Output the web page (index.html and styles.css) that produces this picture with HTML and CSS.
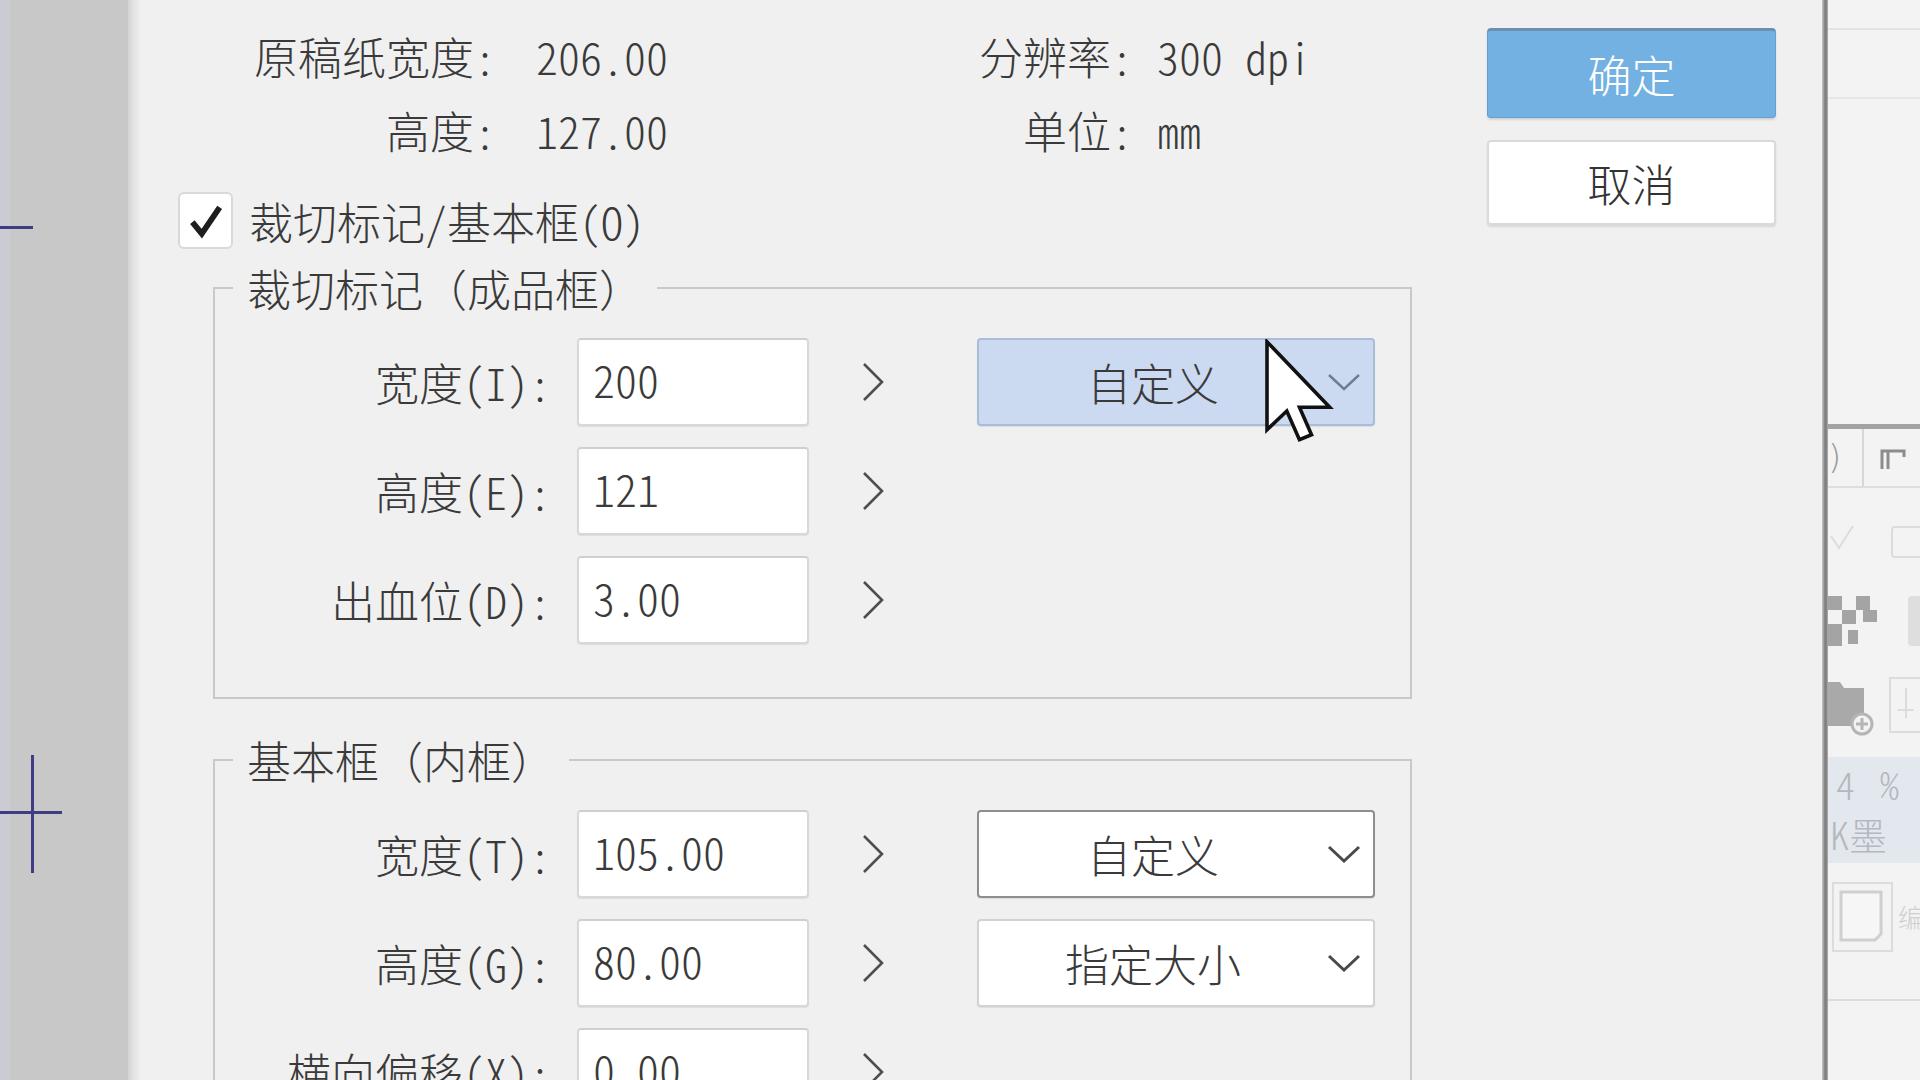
FILE: index.html
```html
<!DOCTYPE html>
<html lang="zh-CN">
<head>
    <meta charset="UTF-8">
    <title>裁切标记/基本框</title>
    <link rel="stylesheet" href="styles.css">
</head>
<body>
    <!-- canvas strip with the trim marks -->
    <div class="canvas">
        <span class="trim trim-top"></span>
        <span class="trim trim-cross-v"></span>
        <span class="trim trim-cross-h"></span>
    </div>
    <div class="canvas-edge"></div>

    <!-- settings dialog -->
    <div class="dialog">
        <div class="form">
            <div class="info">
                <div class="key">原稿纸宽度:</div><div class="val">206.00</div>
                <div class="key">分辨率:</div><div class="val val-b">300 dpi</div>
                <div class="key">高度:</div><div class="val">127.00</div>
                <div class="key">单位:</div><div class="val val-b">mm</div>
            </div>

            <label class="check-row">
                <span class="checkbox">
                    <svg viewBox="0 0 40 40"><path d="M7 21 L16 32 L33 7"/></svg>
                </span>
                裁切标记/基本框(O)
            </label>

            <fieldset class="group">
                <legend>裁切标记（成品框）</legend>
                <div class="row">
                    <span class="lbl">宽度(I):</span>
                    <div class="field">200</div>
                    <svg class="step" viewBox="0 0 40 40"><polyline points="11,2 29,20 11,38"/></svg>
                    <div class="select is-hot">
                        <span class="select-text">自定义</span>
                        <svg class="caret" viewBox="0 0 34 18"><polyline points="2,2 17,16 32,2"/></svg>
                    </div>
                </div>
                <div class="row">
                    <span class="lbl">高度(E):</span>
                    <div class="field">121</div>
                    <svg class="step" viewBox="0 0 40 40"><polyline points="11,2 29,20 11,38"/></svg>
                </div>
                <div class="row">
                    <span class="lbl">出血位(D):</span>
                    <div class="field">3.00</div>
                    <svg class="step" viewBox="0 0 40 40"><polyline points="11,2 29,20 11,38"/></svg>
                </div>
            </fieldset>

            <fieldset class="group group-inner">
                <legend>基本框（内框）</legend>
                <div class="row">
                    <span class="lbl">宽度(T):</span>
                    <div class="field">105.00</div>
                    <svg class="step" viewBox="0 0 40 40"><polyline points="11,2 29,20 11,38"/></svg>
                    <div class="select is-focus">
                        <span class="select-text">自定义</span>
                        <svg class="caret" viewBox="0 0 34 18"><polyline points="2,2 17,16 32,2"/></svg>
                    </div>
                </div>
                <div class="row">
                    <span class="lbl">高度(G):</span>
                    <div class="field">80.00</div>
                    <svg class="step" viewBox="0 0 40 40"><polyline points="11,2 29,20 11,38"/></svg>
                    <div class="select">
                        <span class="select-text">指定大小</span>
                        <svg class="caret" viewBox="0 0 34 18"><polyline points="2,2 17,16 32,2"/></svg>
                    </div>
                </div>
                <div class="row">
                    <span class="lbl">横向偏移(X):</span>
                    <div class="field">0.00</div>
                    <svg class="step" viewBox="0 0 40 40"><polyline points="11,2 29,20 11,38"/></svg>
                </div>
            </fieldset>
        </div>

        <div class="actions">
            <button class="btn btn-ok">确定</button>
            <button class="btn btn-cancel">取消</button>
        </div>

        <!-- mouse pointer over the first dropdown -->
        <svg class="cursor" viewBox="-0.5 -0.5 13 20">
            <path d="M0 0 L0 16 L3.6 12.6 L5.9 17.8 L8.1 16.9 L5.9 11.9 L11.4 11.9 Z"/>
        </svg>
    </div>

    <div class="frame-line"></div>

    <!-- docked panel, mostly hidden behind the dialog -->
    <div class="side">
        <div class="side-head"></div>
        <div class="side-bar"></div>
        <div class="side-space"></div>
        <div class="side-rule"></div>
        <div class="side-tabs">
            <div class="side-tab">)</div>
            <div class="side-tab side-tab-icon">
                <svg viewBox="0 0 30 30"><path d="M4 26 V8 H26 V14 M10 8 V26"/></svg>
            </div>
        </div>
        <svg class="side-tools" viewBox="0 0 92 536">
            <polyline class="faint" points="3,48 11,60 25,38"/>
            <rect class="faint" x="64" y="39" width="30" height="30" rx="3"/>
            <g class="checker">
                <rect x="0" y="108" width="14" height="14"/>
                <rect x="28" y="108" width="14" height="14"/>
                <rect x="14" y="122" width="14" height="14"/>
                <rect x="35" y="122" width="14" height="12"/>
                <rect x="0" y="136" width="14" height="22"/>
                <rect x="20" y="142" width="10" height="14"/>
            </g>
            <rect class="soft" x="80" y="108" width="14" height="50" rx="4"/>
            <path class="folder" d="M0 194 H12 L16 200 H36 V238 H0 Z"/>
            <circle class="plus" cx="34" cy="236" r="10"/>
            <path class="plus-mark" d="M28 236 H40 M34 230 V242"/>
            <rect class="faint" x="62" y="190" width="32" height="54"/>
            <path class="faint" d="M78 200 V230 M70 222 H86"/>
            <rect class="band" x="0" y="269" width="92" height="106"/>
            <text class="band-text" x="8" y="312">4</text>
            <text class="band-text" x="52" y="312">%</text>
            <text class="band-text" x="2" y="362">K墨</text>
            <rect class="faint" x="5" y="395" width="59" height="68"/>
            <path class="doc" d="M13 404 H53 V446 L47 452 H13 Z"/>
            <text class="band-text small" x="70" y="440">编</text>
            <line class="faint" x1="0" y1="512" x2="92" y2="512"/>
        </svg>
    </div>
</body>
</html>
```
FILE: styles.css
```css
/* page: canvas strip, dialog, docked panel side by side */
body {
    margin: 0;
    display: flex;
    height: 1080px;
    overflow: hidden;
    background: #f0f0f0;
    font-family: "Noto Sans CJK SC", sans-serif;
    font-size: 44px;
    font-weight: 300;
    color: #3a3a3a;
    font-feature-settings: "hwid" 1;
}

/* gray canvas with trim marks */
.canvas {
    position: relative;
    width: 128px;
    flex: none;
    background: linear-gradient(to right, #cbcbd3 0, #cbcbd3 10px, #c8c8c8 10px);
}
.trim {
    position: absolute;
    background: #3f3c86;
}
.trim-top { left: 0; top: 226px; width: 33px; height: 3px; }
.trim-cross-v { left: 31px; top: 755px; width: 3px; height: 118px; }
.trim-cross-h { left: 0; top: 811px; width: 62px; height: 3px; }

.canvas-edge {
    width: 12px;
    flex: none;
    background: linear-gradient(to right, #d4d4d4, #e4e4e4 50%, #eeeeee);
}

/* dialog body */
.dialog {
    position: relative;
    display: flex;
    width: 1682px;
    flex: none;
    background: #f0f0f0;
}
.form {
    flex: 1;
    padding-top: 19px;
}

/* paper size info */
.info {
    display: grid;
    grid-template-columns: 356px 340px 297px auto;
    line-height: 74px;
}
.key { text-align: right; }
.val { padding-left: 40px; }
.val-b { padding-left: 24px; }

/* checkbox row */
.check-row {
    display: flex;
    align-items: center;
    margin-top: 25px;
    padding-left: 38px;
    height: 57px;
}
.checkbox {
    display: flex;
    align-items: center;
    justify-content: center;
    width: 55px;
    height: 57px;
    box-sizing: border-box;
    margin-right: 16px;
    background: #fff;
    border: 2px solid #d9d9d9;
    border-radius: 6px;
}
.checkbox svg { width: 42px; height: 42px; }
.checkbox path {
    fill: none;
    stroke: #1e1e1e;
    stroke-width: 5.5;
}

/* group boxes */
.group {
    margin: 14px 0 0 73px;
    width: 1199px;
    min-width: 0;
    box-sizing: border-box;
    padding: 25px 0 53px 0;
    border: 2px solid #c9c9c9;
    border-radius: 0;
    display: flex;
    flex-direction: column;
    gap: 21px;
}
.group-inner { margin-top: 36px; }
.group legend {
    margin-left: 18px;
    padding: 0 14px;
    line-height: 50px;
    font-feature-settings: normal;
}

.row {
    display: flex;
    align-items: center;
    height: 88px;
}
.lbl {
    width: 336px;
    text-align: right;
}
.field {
    width: 232px;
    height: 88px;
    box-sizing: border-box;
    margin-left: 26px;
    padding: 0 0 6px 14px;
    display: flex;
    align-items: center;
    background: #fff;
    border: 2px solid #d8d8d8;
    border-top-color: #cfcfcf;
    border-radius: 4px;
    box-shadow: 0 1px 1px rgba(0, 0, 0, 0.08);
}
.step {
    width: 40px;
    height: 40px;
    margin-left: 44px;
}
.step polyline {
    fill: none;
    stroke: #4e4e4e;
    stroke-width: 2.6;
}

/* dropdowns */
.select {
    display: flex;
    align-items: center;
    width: 398px;
    height: 88px;
    box-sizing: border-box;
    margin-left: 84px;
    padding-right: 12px;
    background: #fff;
    border: 2px solid #d2d2d2;
    border-radius: 4px;
    box-shadow: 0 1px 1px rgba(0, 0, 0, 0.08);
}
.select-text {
    flex: 1;
    text-align: center;
}
.caret {
    width: 34px;
    height: 18px;
}
.caret polyline {
    fill: none;
    stroke: #4a4a4a;
    stroke-width: 3;
}
.select.is-hot {
    background: #cbdaf1;
    border-color: #aabcd7;
}
.select.is-hot .caret polyline {
    stroke: #6f7d90;
    stroke-width: 2.4;
}
.select.is-focus {
    border-color: #8e8e8e;
}

/* OK / Cancel */
.actions {
    width: 289px;
    margin: 28px 46px 0 0;
    display: flex;
    flex-direction: column;
}
.btn {
    font: inherit;
    font-feature-settings: normal;
    border-radius: 4px;
    cursor: pointer;
}
.btn-ok {
    height: 90px;
    color: #fff;
    background: #72b1e2;
    border: 1px solid #649fcf;
    border-top: 3px solid #6c8fb1;
    box-shadow: 0 2px 2px rgba(0, 0, 0, 0.12);
}
.btn-cancel {
    height: 85px;
    margin-top: 22px;
    color: #333;
    background: #fff;
    border: 2px solid #dadada;
    box-shadow: 0 2px 2px rgba(0, 0, 0, 0.1);
}

/* pointer floating over the dialog */
.cursor {
    position: absolute;
    left: 1124px;
    top: 339px;
    width: 72px;
    height: 110px;
}
.cursor path {
    fill: #fff;
    stroke: #111;
    stroke-width: 0.65;
    stroke-linejoin: miter;
}

/* dialog frame edge */
.frame-line {
    width: 6px;
    flex: none;
    background: linear-gradient(to right, #c9c9c9, #8a8a8a 40%, #7a7a7a 70%, #b5b5b5);
}

/* docked panel */
.side {
    width: 92px;
    flex: none;
    display: flex;
    flex-direction: column;
    background: #f3f3f3;
}
.side-head {
    height: 28px;
    border-bottom: 2px solid #e2e2e2;
}
.side-bar {
    height: 67px;
    border-bottom: 2px solid #e6e6e6;
}
.side-space { height: 325px; }
.side-rule {
    height: 5px;
    background: #a3a3a3;
}
.side-tabs {
    display: flex;
    height: 57px;
    border-bottom: 2px solid #dedede;
}
.side-tab {
    width: 34px;
    border-right: 2px solid #d6d6d6;
    color: #9a9a9a;
    font-family: "DejaVu Sans", sans-serif;
    font-size: 34px;
    line-height: 57px;
}
.side-tab-icon {
    flex: 1;
    border-right: none;
    display: flex;
    align-items: center;
    padding-left: 14px;
}
.side-tab-icon svg { width: 30px; height: 30px; }
.side-tab-icon path {
    fill: none;
    stroke: #8c8c8c;
    stroke-width: 3;
}
.side-tools {
    width: 92px;
    height: 536px;
}
.side-tools .faint {
    fill: none;
    stroke: #dcdcdc;
    stroke-width: 2;
}
.side-tools .checker rect { fill: #a4a4a4; }
.side-tools .soft { fill: #dedede; }
.side-tools .folder { fill: #a9a9a9; }
.side-tools .plus { fill: #f3f3f3; stroke: #b5b5b5; stroke-width: 3; }
.side-tools .plus-mark { stroke: #b5b5b5; stroke-width: 3; }
.side-tools .band { fill: #e3e8ee; }
.side-tools .band-text {
    fill: #b4b8bf;
    font-family: "Noto Sans CJK SC", sans-serif;
    font-size: 38px;
}
.side-tools .band-text.small { font-size: 26px; fill: #cfcfcf; }
.side-tools .doc {
    fill: #f6f6f6;
    stroke: #cfcfcf;
    stroke-width: 3;
}
```
